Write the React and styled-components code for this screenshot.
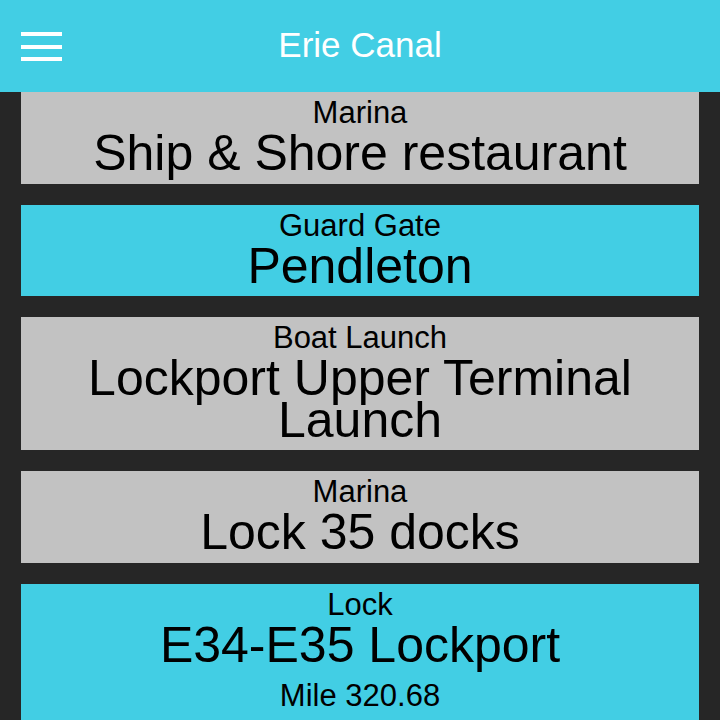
import React from "react";
import styled, { createGlobalStyle } from "styled-components";

const GlobalStyle = createGlobalStyle`
  html, body {
    margin: 0;
    padding: 0;
    background: #262626;
    font-family: "Liberation Sans", Arial, sans-serif;
  }
`;

const stops = [
  { kind: "Marina", name: "Ship & Shore restaurant", tone: "gray" },
  { kind: "Guard Gate", name: "Pendleton", tone: "cyan" },
  { kind: "Boat Launch", name: "Lockport Upper Terminal Launch", tone: "gray" },
  { kind: "Marina", name: "Lock 35 docks", tone: "gray" },
  { kind: "Lock", name: "E34-E35 Lockport", tone: "cyan", mile: "Mile 320.68" },
];

export default function App() {
  return (
    <Page>
      <GlobalStyle />
      <Header>
        <MenuButton aria-label="menu">
          <Bar />
          <Bar />
          <Bar />
        </MenuButton>
        <Title>Erie Canal</Title>
        <span />
      </Header>

      <List>
        {stops.map((s, i) => (
          <Card key={i} tone={s.tone}>
            <Kind>{s.kind}</Kind>
            <Name>{s.name}</Name>
            {s.mile && <Mile>{s.mile}</Mile>}
          </Card>
        ))}
      </List>
    </Page>
  );
}

const Page = styled.div`
  width: 720px;
  height: 720px;
  overflow: hidden;
  background: #262626;
`;

const Header = styled.header`
  height: 92px;
  background: #42cee4;
  display: grid;
  grid-template-columns: 1fr auto 1fr;
  align-items: center;
  padding: 0 21px;
`;

const MenuButton = styled.button`
  display: flex;
  flex-direction: column;
  gap: 8.5px;
  width: 41px;
  padding: 0;
  margin: 1px 0 0;
  border: none;
  background: none;
`;

const Bar = styled.span`
  display: block;
  width: 41px;
  height: 4px;
  background: #fff;
`;

const Title = styled.h1`
  margin: 0 0 2px;
  font-size: 35px;
  font-weight: 400;
  color: #fff;
`;

const List = styled.div`
  display: flex;
  flex-direction: column;
  gap: 21px;
  padding: 0 21px;
`;

const Card = styled.div`
  background: ${(p) => (p.tone === "cyan" ? "#42cee4" : "#c2c2c2")};
  color: #000;
  text-align: center;
  padding: 0 10px 9px;
`;

const Kind = styled.div`
  font-size: 31px;
  line-height: 41px;
`;

const Name = styled.div`
  font-size: 50px;
  line-height: 41.5px;
`;

const Mile = styled.div`
  margin-top: 9px;
  font-size: 31px;
  line-height: 41px;
`;
